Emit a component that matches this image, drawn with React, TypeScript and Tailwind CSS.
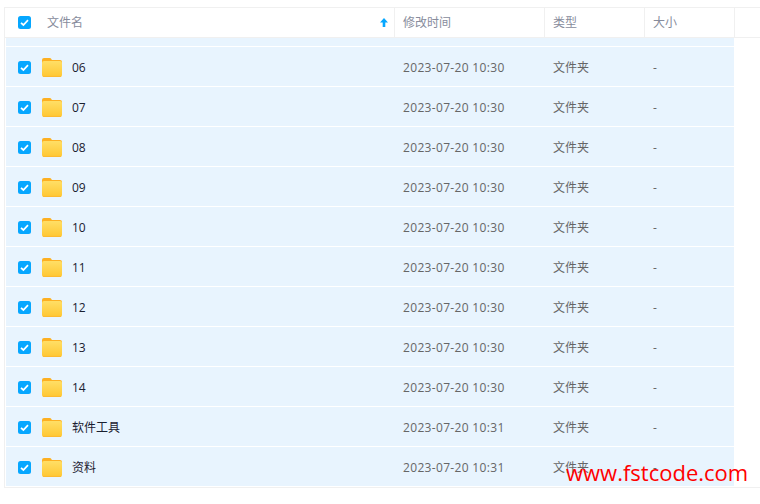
const rows = [
  ["06", "2023-07-20 10:30"],
  ["07", "2023-07-20 10:30"],
  ["08", "2023-07-20 10:30"],
  ["09", "2023-07-20 10:30"],
  ["10", "2023-07-20 10:30"],
  ["11", "2023-07-20 10:30"],
  ["12", "2023-07-20 10:30"],
  ["13", "2023-07-20 10:30"],
  ["14", "2023-07-20 10:30"],
  ["软件工具", "2023-07-20 10:31"],
  ["资料", "2023-07-20 10:31"],
];

const font = { fontFamily: '"Open Sans","Noto Sans CJK SC",sans-serif' };

function Check() {
  return (
    <svg width="13" height="13" viewBox="0 0 13 13" className="shrink-0">
      <rect width="13" height="13" rx="2.5" fill="#06a7ff" />
      <path d="M3 6.8 L5.4 9 L10 4.2" fill="none" stroke="#fff" strokeWidth="1.7" />
    </svg>
  );
}

function Folder() {
  return (
    <svg width="20" height="19" viewBox="0 0 20 19" className="block shrink-0">
      <path d="M0 2 Q0 0 2 0 H7.5 Q9 0 9.6 1.4 L10 2 H18 Q20 2 20 4 V8 H0 Z" fill="#fdb022" />
      <path d="M0 5 Q0 3 2 3 H18 Q20 3 20 5 V17 Q20 19 18 19 H2 Q0 19 0 17 Z" fill="url(#g)" />
      <path d="M1 18.4 H19" stroke="#fdb930" strokeWidth="1" />
      <defs>
        <linearGradient id="g" x1="0" y1="0" x2="0" y2="1">
          <stop offset="0" stopColor="#ffdf66" />
          <stop offset="1" stopColor="#ffc732" />
        </linearGradient>
      </defs>
    </svg>
  );
}

function HeaderCell({ className, children }: { className: string; children: React.ReactNode }) {
  return <div className={`flex items-center border-r border-[#f0f0f0] ${className}`}>{children}</div>;
}

export default function App() {
  return (
    <div className="relative h-[504px] w-[760px] overflow-hidden bg-white pt-[7px] text-[12px]" style={font}>
      <div className="ml-1 border-l border-[#f0f0f0]">
        <div className="flex h-[31px] border-y border-[#f0f0f0] text-[#878c9c]">
          <HeaderCell className="w-[390px] pl-[13px] pr-[6px]">
            <Check />
            <span className="ml-[16px] flex-1">文件名</span>
            <svg width="8" height="9" viewBox="0 0 8 9">
              <path d="M4 0 L8 4.5 H5.3 V9 H2.7 V4.5 H0 Z" fill="#06a7ff" />
            </svg>
          </HeaderCell>
          <HeaderCell className="w-[150px] pl-2">修改时间</HeaderCell>
          <HeaderCell className="w-[100px] pl-2">类型</HeaderCell>
          <HeaderCell className="w-[90px] pl-2">大小</HeaderCell>
        </div>
        <div className="ml-px h-[8px] w-[728px] bg-[#e8f4fe]" />
        {rows.map(([name, time]) => (
          <div key={name} className="ml-px mt-px flex h-[39px] w-[728px] items-center bg-[#e8f4fe] pt-[2px] text-[#666666]">
            <div className="flex w-[389px] items-center pl-[12px]">
              <Check />
              <span className="ml-[11px]"><Folder /></span>
              <span className="ml-[10px] text-[#1a2030]">{name}</span>
            </div>
            <div className="w-[150px] pl-2 tracking-[0.33px]">{time}</div>
            <div className="w-[100px] pl-2">文件夹</div>
            <div className="pl-2">-</div>
          </div>
        ))}
        <div className="mt-px border-t border-[#f0f0f0]" />
      </div>
      <div className="absolute left-[566px] top-[456px] text-[22px] leading-[32px] text-[#ff0000]" style={font}>
        www.fstcode.com
      </div>
    </div>
  );
}
